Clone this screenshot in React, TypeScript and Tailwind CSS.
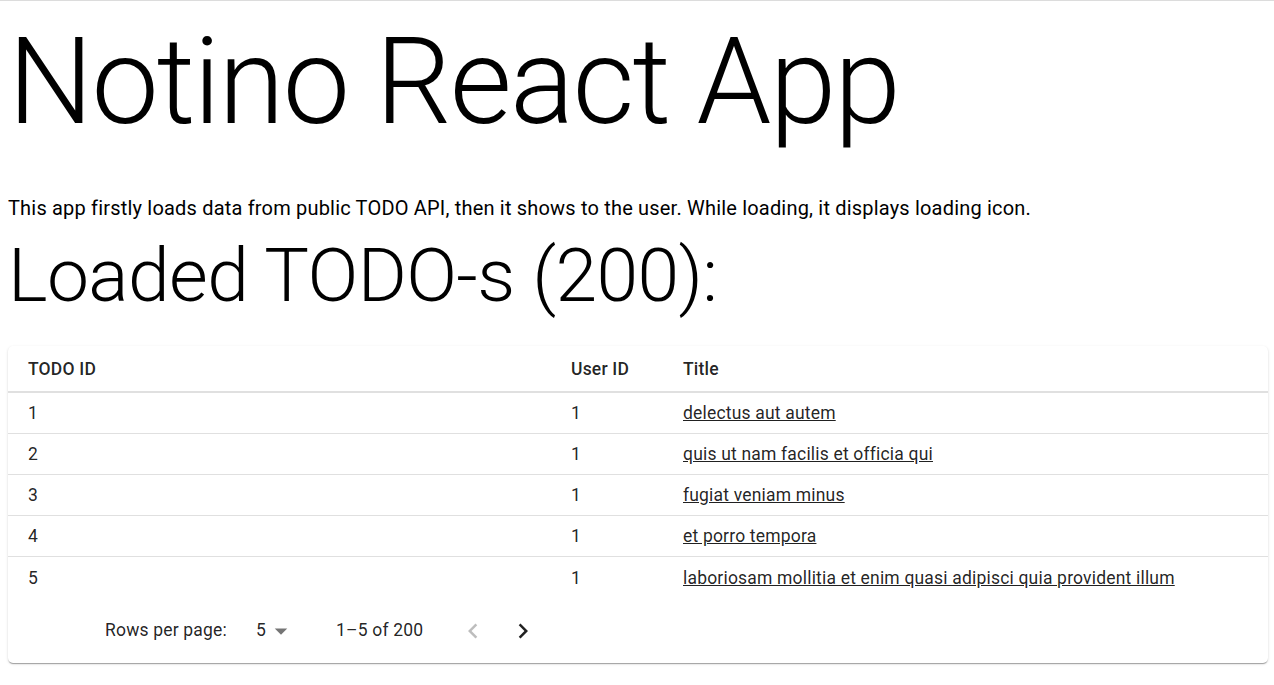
import React from "react";

const rows = [
  { id: 1, userId: 1, title: "delectus aut autem" },
  { id: 2, userId: 1, title: "quis ut nam facilis et officia qui" },
  { id: 3, userId: 1, title: "fugiat veniam minus" },
  { id: 4, userId: 1, title: "et porro tempora" },
  { id: 5, userId: 1, title: "laboriosam mollitia et enim quasi adipisci quia provident illum" },
];

export default function App() {
  return (
    <div className="font-['Roboto',sans-serif] text-black bg-white min-h-[685px]">
      <div className="h-px bg-[#dcdcdc]" />
      <div className="pl-2 pr-[6px]">
        <h1 className="mt-[11px] text-[120px] leading-[140px] font-light tracking-[-0.01562em]">
          Notino React App
        </h1>
        <p className="mt-[41px] text-[20px] leading-[30px] tracking-[0.00938em]">
          This app firstly loads data from public TODO API, then it shows to the user. While loading, it displays loading icon.
        </p>
        <h2 className="mt-[7px] text-[75px] leading-[90px] font-light tracking-[-0.00833em]">
          Loaded TODO-s (200):
        </h2>
        <div className="mt-[26px] bg-white rounded-[5px] shadow-[0px_2px_1px_-1px_rgba(0,0,0,0.2),0px_1px_1px_0px_rgba(0,0,0,0.14),0px_1px_3px_0px_rgba(0,0,0,0.12)] text-[17.5px] leading-[25px] tracking-[0.01071em] text-[rgba(0,0,0,0.87)]">
          <div className="grid grid-cols-[543px_112px_1fr] h-[47px] pt-px items-center border-b-2 border-[#e0e0e0] font-medium">
            <div className="px-[20px]">TODO ID</div>
            <div className="px-[20px]">User ID</div>
            <div className="px-[20px]">Title</div>
          </div>
          {rows.map((r, i) => (
            <div
              key={r.id}
              className={
                i < rows.length - 1
                  ? "grid grid-cols-[543px_112px_1fr] h-[41px] pt-px items-center border-b border-[#e0e0e0]"
                  : "grid grid-cols-[543px_112px_1fr] h-[41px] pt-px items-center"
              }
            >
              <div className="px-[20px]">{r.id}</div>
              <div className="px-[20px]">{r.userId}</div>
              <div className="px-[20px]">
                <a href="#" className="underline">{r.title}</a>
              </div>
            </div>
          ))}
          <div className="h-[65px] flex items-center pl-[97px]">
            <span>Rows per page:</span>
            <div className="relative ml-[19px] pl-[10px] pr-[30px]">
              <span>5</span>
              <svg viewBox="0 0 24 24" className="absolute right-0 top-1/2 -translate-y-1/2 w-[30px] h-[30px]" fill="rgba(0,0,0,0.54)">
                <path d="M7 10l5 5 5-5z" />
              </svg>
            </div>
            <span className="ml-[40px]">1–5 of 200</span>
            <div className="ml-[25px] flex">
              <button className="w-[50px] h-[50px] flex items-center justify-center">
                <svg viewBox="0 0 24 24" className="w-[30px] h-[30px]" fill="rgba(0,0,0,0.26)">
                  <path d="M15.41 16.59L10.83 12l4.58-4.59L14 6l-6 6 6 6 1.41-1.41z" />
                </svg>
              </button>
              <button className="w-[50px] h-[50px] flex items-center justify-center">
                <svg viewBox="0 0 24 24" className="w-[30px] h-[30px]" fill="rgba(0,0,0,0.87)">
                  <path d="M8.59 16.59L13.17 12 8.59 7.41 10 6l6 6-6 6-1.41-1.41z" />
                </svg>
              </button>
            </div>
          </div>
        </div>
      </div>
    </div>
  );
}
